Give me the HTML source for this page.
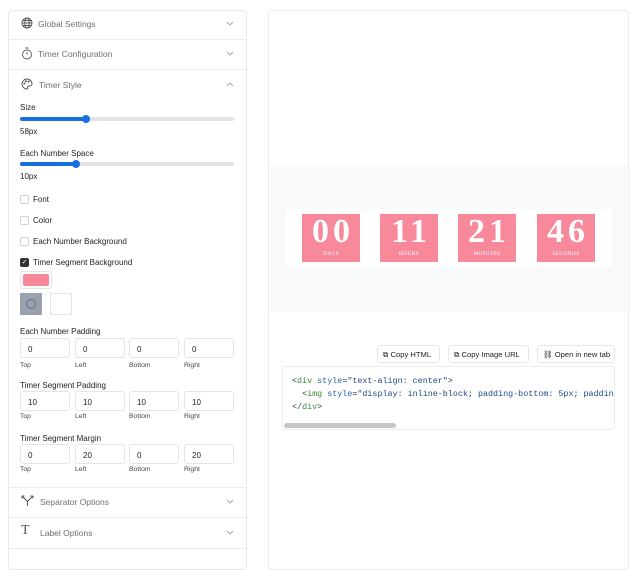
<!DOCTYPE html>
<html><head><style>
*{box-sizing:border-box;margin:0;padding:0}
body{width:640px;height:557px;background:#fff;font-family:"Liberation Sans",sans-serif;position:relative;overflow:hidden;color:#222}
.a{position:absolute}
.lp{left:8px;top:10px;width:239px;height:560px;border:1px solid #e8e8ea;border-radius:4px}
.hd{position:absolute;left:8px;width:239px;border-top:1px solid #ececee}
.ht{font-size:8.5px;color:#6b6f76}
.lb{font-size:8px;color:#222}
.sm{font-size:6.8px;color:#444}
.cb{width:9px;height:9px;border:1px solid #cfd2d6;border-radius:2px;background:#fff}
.in{height:20px;width:50px;border:1px solid #e4e5e8;border-radius:3px;font-size:8px;padding:6px 0 0 7px;color:#222}
.seg{position:absolute;top:214px;width:58px;height:48px;background:#f7899b;color:#fff;text-align:center;font-family:"Liberation Serif",serif}
.seg b{display:block;font-weight:bold;font-size:34px;line-height:34px;margin-top:1px;letter-spacing:4px;padding-left:4px}
.seg i{display:block;font-style:normal;font-size:5.5px;letter-spacing:.3px;margin-top:2px}
.btn{position:absolute;top:345px;height:18px;border:1px solid #e6e7ea;border-radius:3px;font-size:7.6px;padding:4px 0 0 5px;color:#222;white-space:nowrap;overflow:hidden}
code{display:block;font-family:"Liberation Mono",monospace;font-size:8.4px;line-height:13px;white-space:pre;color:#333}
.g{color:#3a8a3a}.bl{color:#2c5fa8}.s{color:#204a87}
</style></head><body>
<div class="a lp"></div>
<div class="hd" style="top:39px"></div>
<div class="hd" style="top:69px"></div>
<div class="hd" style="top:487px"></div>
<div class="hd" style="top:517px"></div>
<div class="hd" style="top:548px"></div>

<svg width="0" height="0" style="position:absolute"><defs><path id="dn" d="M1 1l3 3 3-3" fill="none" stroke="#aaa" stroke-width="1"/></defs></svg>

<svg class="a" style="left:21px;top:17px" width="12" height="12" viewBox="0 0 12 12" fill="none" stroke="#555" stroke-width=".9"><circle cx="6" cy="6" r="5"/><ellipse cx="6" cy="6" rx="2.2" ry="5"/><path d="M1 6h10M1.8 3.5h8.4M1.8 8.5h8.4"/></svg>
<div class="a ht" style="left:38px;top:19px">Global Settings</div>
<svg class="a" style="left:226px;top:21px" width="8" height="5"><use href="#dn"/></svg>
<svg class="a" style="left:21px;top:47px" width="12" height="13" viewBox="0 0 12 13" fill="none" stroke="#555" stroke-width=".9"><circle cx="6" cy="7.5" r="4.5"/><path d="M4.5 1h3M6 7.5V5"/></svg>
<div class="a ht" style="left:38px;top:49px">Timer Configuration</div>
<svg class="a" style="left:226px;top:51px" width="8" height="5"><use href="#dn"/></svg>
<svg class="a" style="left:21px;top:78px" width="12" height="12" viewBox="0 0 12 12" fill="none" stroke="#555" stroke-width=".9"><path d="M6 1a5 5 0 1 0 0 10c1 0 1-1 .6-1.6-.5-.7 0-1.4.8-1.4H9a2 2 0 0 0 2-2C11 3 8.8 1 6 1z"/><circle cx="3.5" cy="5.5" r=".6"/><circle cx="5" cy="3.3" r=".6"/><circle cx="7.7" cy="3.5" r=".6"/></svg>
<div class="a ht" style="left:39px;top:80px">Timer Style</div>
<svg class="a" style="left:226px;top:82px" width="8" height="5"><path d="M1 4l3-3 3 3" fill="none" stroke="#aaa"/></svg>

<div class="a lb" style="left:20px;top:103px">Size</div>
<div class="a" style="left:20px;top:117px;width:214px;height:4px;background:#e2e3e6;border-radius:2px"></div>
<div class="a" style="left:20px;top:117px;width:66px;height:4px;background:#1a6fe0;border-radius:2px"></div>
<div class="a" style="left:82px;top:115px;width:8px;height:8px;background:#1a6fe0;border-radius:50%"></div>
<div class="a lb" style="left:20px;top:127px">58px</div>
<div class="a lb" style="left:20px;top:149px">Each Number Space</div>
<div class="a" style="left:20px;top:162px;width:214px;height:4px;background:#e2e3e6;border-radius:2px"></div>
<div class="a" style="left:20px;top:162px;width:56px;height:4px;background:#1a6fe0;border-radius:2px"></div>
<div class="a" style="left:72px;top:160px;width:8px;height:8px;background:#1a6fe0;border-radius:50%"></div>
<div class="a lb" style="left:20px;top:172px">10px</div>

<div class="a cb" style="left:20px;top:195px"></div><div class="a lb" style="left:33px;top:195px">Font</div>
<div class="a cb" style="left:20px;top:216px"></div><div class="a lb" style="left:33px;top:216px">Color</div>
<div class="a cb" style="left:20px;top:237px"></div><div class="a lb" style="left:33px;top:237px">Each Number Background</div>
<div class="a cb" style="left:20px;top:258px;background:#333;border-color:#333;color:#fff;font-size:7px;line-height:7px;text-align:center">✓</div><div class="a lb" style="left:33px;top:258px">Timer Segment Background</div>
<div class="a" style="left:20px;top:271px;width:32px;height:18px;border:1px solid #e4e5e8;border-radius:3px;padding:2px"><div style="width:100%;height:100%;background:#f7899b;border-radius:2px"></div></div>
<div class="a" style="left:20px;top:293px;width:22px;height:22px;background:#9aa1ae"><div style="margin:6px;width:10px;height:10px;border:1px solid #6a7080;border-radius:50%"></div></div>
<div class="a" style="left:50px;top:293px;width:22px;height:22px;border:1px solid #e4e5e8"></div>

<div class="a lb" style="left:20px;top:327px">Each Number Padding</div>
<div class="a in" style="left:20px;top:338px">0</div><div class="a in" style="left:75px;top:338px">0</div><div class="a in" style="left:129px;top:338px">0</div><div class="a in" style="left:184px;top:338px">0</div>
<div class="a sm" style="left:20px;top:362px">Top</div><div class="a sm" style="left:75px;top:362px">Left</div><div class="a sm" style="left:129px;top:362px">Bottom</div><div class="a sm" style="left:184px;top:362px">Right</div>
<div class="a lb" style="left:20px;top:381px">Timer Segment Padding</div>
<div class="a in" style="left:20px;top:391px">10</div><div class="a in" style="left:75px;top:391px">10</div><div class="a in" style="left:129px;top:391px">10</div><div class="a in" style="left:184px;top:391px">10</div>
<div class="a sm" style="left:20px;top:413px">Top</div><div class="a sm" style="left:75px;top:413px">Left</div><div class="a sm" style="left:129px;top:413px">Bottom</div><div class="a sm" style="left:184px;top:413px">Right</div>
<div class="a lb" style="left:20px;top:434px">Timer Segment Margin</div>
<div class="a in" style="left:20px;top:444px">0</div><div class="a in" style="left:75px;top:444px">20</div><div class="a in" style="left:129px;top:444px">0</div><div class="a in" style="left:184px;top:444px">20</div>
<div class="a sm" style="left:20px;top:466px">Top</div><div class="a sm" style="left:75px;top:466px">Left</div><div class="a sm" style="left:129px;top:466px">Bottom</div><div class="a sm" style="left:184px;top:466px">Right</div>

<svg class="a" style="left:21px;top:495px" width="13" height="12" viewBox="0 0 13 12" fill="none" stroke="#555" stroke-width="1"><path d="M1 1l5.5 5.5V11M12 1L6.5 6.5M1 1v2.5M1 1h2.5M12 1v2.5M12 1H9.5"/></svg>
<div class="a ht" style="left:40px;top:497px">Separator Options</div>
<svg class="a" style="left:226px;top:499px" width="8" height="5"><use href="#dn"/></svg>
<div class="a" style="left:21px;top:524px;font-family:'Liberation Serif',serif;font-size:14px;color:#555;line-height:14px">T</div>
<div class="a ht" style="left:40px;top:528px">Label Options</div>
<svg class="a" style="left:226px;top:530px" width="8" height="5"><use href="#dn"/></svg>

<div class="a" style="left:268px;top:10px;width:361px;height:560px;border:1px solid #ececee;border-radius:4px"></div>
<div class="a" style="left:271px;top:165px;width:356px;height:147px;background:#f8f9fb"></div>
<div class="a" style="left:285px;top:209px;width:327px;height:58px;background:#fff;border-radius:3px"></div>
<div class="seg" style="left:302px"><b>00</b><i>DAYS</i></div>
<div class="seg" style="left:380px"><b>11</b><i>HOURS</i></div>
<div class="seg" style="left:458px"><b>21</b><i>MINUTES</i></div>
<div class="seg" style="left:537px"><b>46</b><i>SECONDS</i></div>

<div class="btn" style="left:377px;width:63px">⧉ Copy HTML</div>
<div class="btn" style="left:448px;width:81px">⧉ Copy Image URL</div>
<div class="btn" style="left:537px;width:78px">⛓ Open in new tab</div>
<div class="a" style="left:282px;top:366px;width:333px;height:64px;border:1px solid #ececee;border-radius:3px;overflow:hidden;padding:8px 0 0 9px"><code>&lt;<span class="g">div</span> <span class="bl">style</span>=<span class="s">"text-align: center"</span>&gt;
  &lt;<span class="g">img</span> <span class="bl">style</span>=<span class="s">"display: inline-block; padding-bottom: 5px; padding-top</span>
&lt;/<span class="g">div</span>&gt;</code></div>
<div class="a" style="left:284px;top:423px;width:112px;height:5px;background:#c4c6ca;border-radius:3px"></div>
</body></html>
